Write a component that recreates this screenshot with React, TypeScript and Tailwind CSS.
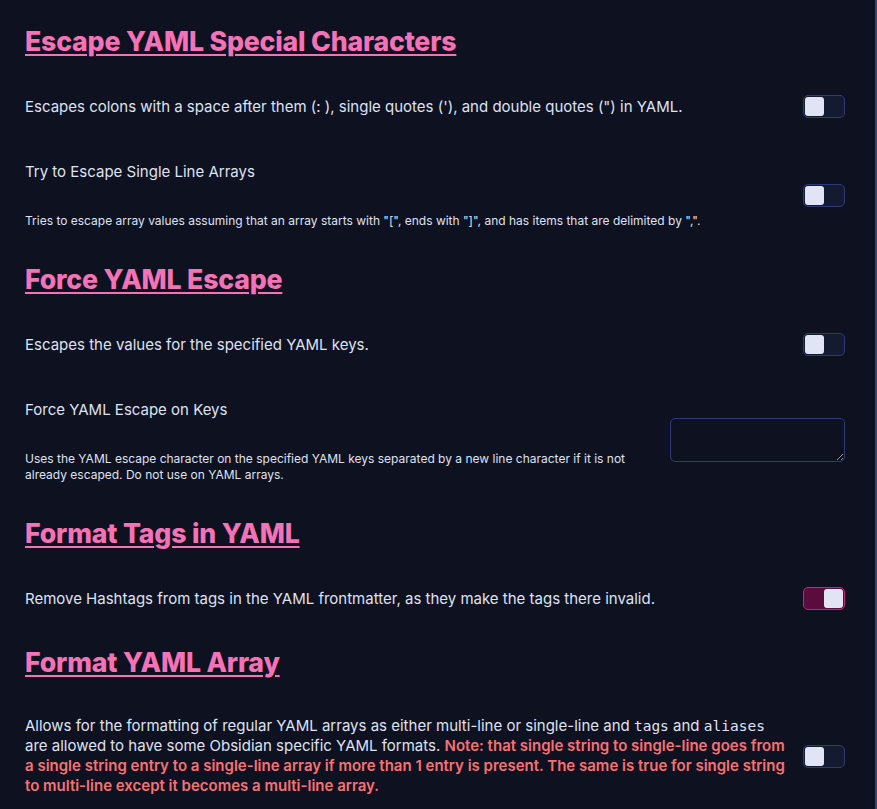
import React, { useState } from "react";

function Toggle({ on }: { on?: boolean }) {
  const [checked, setChecked] = useState(!!on);
  return (
    <button
      onClick={() => setChecked(!checked)}
      className={
        checked
          ? "flex h-[23px] w-[42px] shrink-0 items-center justify-end rounded-[5px] border border-[#c2257a] bg-[#5a0d3c] p-[1px]"
          : "flex h-[23px] w-[42px] shrink-0 items-center justify-start rounded-[5px] border border-[#2d3a78] bg-[#141a2f] p-[1px]"
      }
    >
      <span className="block h-[19px] w-[19px] rounded-[3px] bg-[#e1e4f4]" />
    </button>
  );
}

function Heading({ children }: { children: React.ReactNode }) {
  return (
    <h2 className="mt-3 mb-4 text-[26.7px] leading-[32px] font-extrabold tracking-[-0.2px] text-[#f472b6] underline decoration-2 underline-offset-[3px]">
      {children}
    </h2>
  );
}

function Item({
  name,
  desc,
  control,
  small,
}: {
  name?: string;
  desc: React.ReactNode;
  control: React.ReactNode;
  small?: boolean;
}) {
  return (
    <div className="flex items-center py-[22px]">
      <div className="min-w-0 flex-1 pr-4">
        {name && <div className="mb-[31px] text-[15px] leading-5">{name}</div>}
        <div className={small ? "text-[12px] leading-4" : "text-[15px] leading-5"}>{desc}</div>
      </div>
      {control}
    </div>
  );
}

const mono = "font-['DejaVu_Sans_Mono',monospace] text-[14.5px] leading-none";

export default function App() {
  return (
    <div
      className="min-h-screen border-r-2 border-[#34428a] bg-[#0e1120] pl-[25px] pr-[30px] pt-[13px] text-[#dfe2f1]"
      style={{ fontFamily: "Inter, 'Noto Sans', sans-serif" }}
    >
      <Heading>Escape YAML Special Characters</Heading>
      <Item
        desc={`Escapes colons with a space after them (: ), single quotes ('), and double quotes (") in YAML.`}
        control={<Toggle />}
      />
      <Item
        name="Try to Escape Single Line Arrays"
        small
        desc={`Tries to escape array values assuming that an array starts with "[", ends with "]", and has items that are delimited by ",".`}
        control={<Toggle />}
      />

      <Heading>Force YAML Escape</Heading>
      <Item desc="Escapes the values for the specified YAML keys." control={<Toggle />} />
      <Item
        name="Force YAML Escape on Keys"
        small
        desc="Uses the YAML escape character on the specified YAML keys separated by a new line character if it is not already escaped. Do not use on YAML arrays."
        control={
          <textarea className="mb-[4px] h-[44px] w-[175px] shrink-0 rounded-[5px] border border-[#2d3a78] bg-[#0e1120] p-1 text-[13px] outline-none" />
        }
      />

      <Heading>Format Tags in YAML</Heading>
      <Item
        desc="Remove Hashtags from tags in the YAML frontmatter, as they make the tags there invalid."
        control={<Toggle on />}
      />

      <div className="pt-[2px]">
        <Heading>Format YAML Array</Heading>
      </div>
      <Item
        desc={
          <>
            Allows for the formatting of regular YAML arrays as either multi-line or single-line and{" "}
            <code className={mono}>tags</code> and <code className={mono}>aliases</code> are allowed to have some
            Obsidian specific YAML formats.{" "}
            <span className="font-semibold text-[#f87171]">
              Note: that single string to single-line goes from a single string entry to a single-line array if more
              than 1 entry is present. The same is true for single string to multi-line except it becomes a
              multi-line array.
            </span>
          </>
        }
        control={<Toggle />}
      />
    </div>
  );
}
